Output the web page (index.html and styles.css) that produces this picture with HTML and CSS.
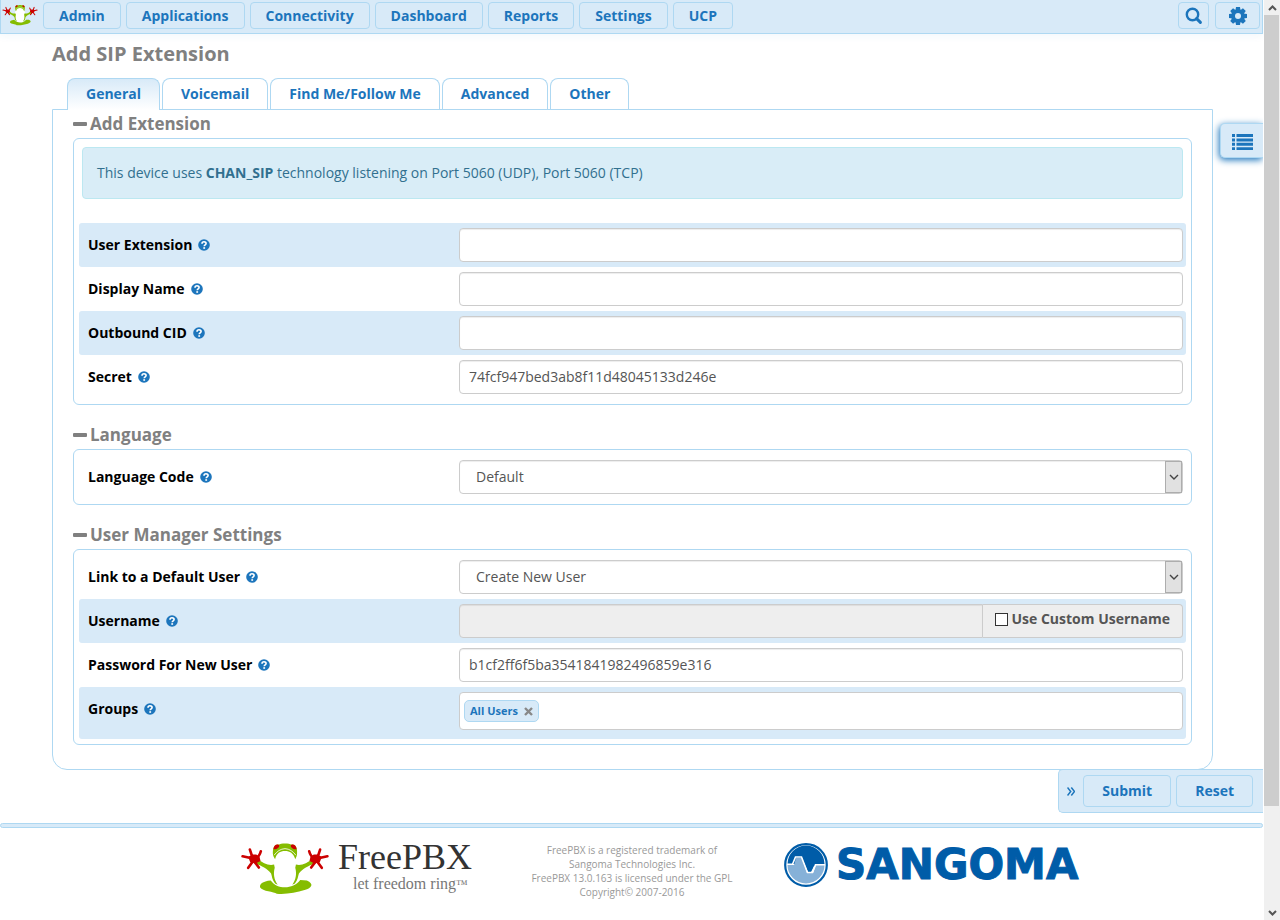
FILE: index.html
```html
<!DOCTYPE html>
<html lang="en">
<head>
<meta charset="utf-8">
<title>Add SIP Extension</title>
<link rel="stylesheet" href="styles.css">
</head>
<body>
<svg class="defs" aria-hidden="true">
  <symbol id="frog" viewBox="30 80 270 160">
    <path fill="#fff" d="M132 124C138 104 150 98 165 98C181 98 192 104 198 124C204 150 212 180 194 206C182 222 150 222 137 206C120 180 126 150 132 124Z"/>
    <g fill="#85bd00">
      <path d="M82 130C98 145 116 152 132 148L134 158C129 176 132 194 143 209L135 205C126 194 126 184 123 175C112 162 94 151 76 146Z"/>
      <path d="M248 130C232 145 214 152 198 148L196 158C201 176 198 194 187 209L195 205C204 194 204 184 207 175C218 162 236 151 254 146Z"/>
      <path d="M129 121C126 97 134 86 146 88C151 83 179 83 184 88C197 86 204 97 201 121L196 132C190 113 180 107 165 107C150 107 140 113 135 132Z"/>
      <path d="M90 217C87 208 97 198 122 196C141 224 189 224 211 195L231 196C254 207 246 218 224 225C199 232 168 239 140 236C132 229 97 229 90 217Z"/>
    </g>
    <path fill="none" stroke="#fff" stroke-width="2.500" d="M132 120C141 108 151 101 165 100C179 101 189 108 198 120"/>
    <g fill="#c00">
      <path d="M130 102C131 90 139 85 147 89C150 95 141 103 130 102Z"/>
      <path d="M200 102C199 90 191 85 183 89C180 95 189 103 200 102Z"/>
      <path d="M54 125L66 118H78L88 124L91 137L76 145L60 141Z"/>
      <path d="M276 125L264 118H252L242 124L239 137L254 145L270 141Z"/>
    </g>
    <g fill="none" stroke="#c00" stroke-width="8" stroke-linecap="round" stroke-linejoin="round">
      <path d="M37 123L68 130L59 103M76 130Q88 124 92 108M54 158L70 136L86 157"/>
      <path d="M293 123L262 130L271 103M254 130Q242 124 238 108M276 158L260 136L244 157"/>
    </g>
  </symbol>
  <symbol id="help" viewBox="0 0 12 12">
    <circle cx="6" cy="6" r="5.8" fill="#1c75bc"/>
    <path d="M4 4.7C4 2.2 8.1 2.2 8.1 4.6C8.1 5.9 6.2 5.9 6.2 7.3" fill="none" stroke="#fff" stroke-width="1.6"/>
    <path d="M5.3 8.2h1.8v1.6H5.3z" fill="#fff"/>
  </symbol>
  <symbol id="chevron" viewBox="0 0 10 10">
    <path d="M1 3l4 4 4-4" fill="none" stroke="#444" stroke-width="1.4"/>
  </symbol>
</svg>
<div class="screen">
  <div class="app">
    <header class="topbar">
      <a class="brand" href="#" aria-label="FreePBX"><svg width="36" height="22"><use href="#frog"/></svg></a>
      <nav class="menu">
        <button class="btn">Admin</button>
        <button class="btn">Applications</button>
        <button class="btn">Connectivity</button>
        <button class="btn">Dashboard</button>
        <button class="btn">Reports</button>
        <button class="btn">Settings</button>
        <button class="btn">UCP</button>
      </nav>
      <div class="tools">
        <button class="btn btn-search" aria-label="Search">
          <svg width="18" height="18" viewBox="0 0 18 18" fill="none" stroke="#1c75bc"><circle cx="7.5" cy="7.5" r="5.7" stroke-width="2.4"/><path d="M11.6 11.6L15.4 15.4" stroke-width="3" stroke-linecap="round"/></svg>
        </button>
        <button class="btn btn-gear" aria-label="Settings menu">
          <svg width="18" height="18" viewBox="-9 -9 18 18"><g fill="#1c75bc"><circle r="6.8"/><g id="teeth"><path d="M-2-9h4l.6 4h-5.2zM-2 9h4l.6-4h-5.2z"/><path d="M-9-2v4l4 .6v-5.2zM9-2v4l-4 .6v-5.2z"/></g><use href="#teeth" transform="rotate(45)"/></g><circle r="3" fill="#d8eaf8"/></svg>
        </button>
      </div>
    </header>

    <main class="content">
      <h1>Add SIP Extension</h1>
      <div class="tabs" role="tablist">
        <button class="tab active" role="tab" aria-selected="true">General</button>
        <button class="tab" role="tab">Voicemail</button>
        <button class="tab" role="tab">Find Me/Follow Me</button>
        <button class="tab" role="tab">Advanced</button>
        <button class="tab" role="tab">Other</button>
      </div>
      <form class="panel" id="extension">
        <section>
          <h2><span class="minus"></span>Add Extension</h2>
          <div class="box">
            <div class="alert">This device uses <strong>CHAN_SIP</strong> technology listening on Port 5060 (UDP), Port 5060 (TCP)</div>
            <div class="row shaded">
              <label for="ext">User Extension <svg class="help"><use href="#help"/></svg></label>
              <input class="field" id="ext" type="text">
            </div>
            <div class="row">
              <label for="name">Display Name <svg class="help"><use href="#help"/></svg></label>
              <input class="field" id="name" type="text">
            </div>
            <div class="row shaded">
              <label for="cid">Outbound CID <svg class="help"><use href="#help"/></svg></label>
              <input class="field" id="cid" type="text">
            </div>
            <div class="row">
              <label for="secret">Secret <svg class="help"><use href="#help"/></svg></label>
              <input class="field" id="secret" type="text" value="74fcf947bed3ab8f11d48045133d246e">
            </div>
          </div>
        </section>
        <section>
          <h2><span class="minus"></span>Language</h2>
          <div class="box">
            <div class="row">
              <label for="lang">Language Code <svg class="help"><use href="#help"/></svg></label>
              <div class="select"><select class="field" id="lang"><option>Default</option></select><span class="drop"><svg width="10" height="10"><use href="#chevron"/></svg></span></div>
            </div>
          </div>
        </section>
        <section>
          <h2><span class="minus"></span>User Manager Settings</h2>
          <div class="box">
            <div class="row">
              <label for="link">Link to a Default User <svg class="help"><use href="#help"/></svg></label>
              <div class="select"><select class="field" id="link"><option>Create New User</option></select><span class="drop"><svg width="10" height="10"><use href="#chevron"/></svg></span></div>
            </div>
            <div class="row shaded">
              <label for="user">Username <svg class="help"><use href="#help"/></svg></label>
              <div class="group">
                <input class="field" id="user" type="text" disabled>
                <div class="addon"><input type="checkbox" id="custom"><label for="custom">Use Custom Username</label></div>
              </div>
            </div>
            <div class="row">
              <label for="pass">Password For New User <svg class="help"><use href="#help"/></svg></label>
              <input class="field" id="pass" type="text" value="b1cf2ff6f5ba3541841982496859e316">
            </div>
            <div class="row shaded row-tags">
              <label for="groups">Groups <svg class="help"><use href="#help"/></svg></label>
              <div class="tagbox">
                <span class="tag">All Users<button type="button" aria-label="Remove All Users"><svg width="9" height="9" viewBox="0 0 9 9"><path d="M1 1l7 7M8 1L1 8" stroke="#888" stroke-width="2.4"/></svg></button></span>
                <input id="groups" type="text">
              </div>
            </div>
          </div>
        </section>
      </form>
    </main>

    <div class="actions">
      <button class="collapse" aria-label="Collapse"><svg width="8" height="9" viewBox="0 0 8 9" fill="none" stroke="#1c75bc" stroke-width="1.5"><path d="M.5.5l3.2 4-3.2 4M4.3.5l3.2 4-3.2 4"/></svg></button>
      <button class="btn" type="submit" form="extension">Submit</button>
      <button class="btn" type="reset" form="extension">Reset</button>
    </div>
    <div class="rule"></div>
    <footer class="footer">
      <svg class="logo-freepbx" width="240" height="66" viewBox="0 -10 240 66" role="img" aria-label="FreePBX let freedom ring">
        <use href="#frog" x="0" y="0" width="90" height="53"/>
        <text class="word" x="98" y="27">FreePBX</text>
        <text class="motto" x="113" y="47">let freedom ring<tspan class="tm" dy="-1">™</tspan></text>
      </svg>
      <p>FreePBX is a registered trademark of<br>Sangoma Technologies Inc.<br>FreePBX 13.0.163 is licensed under the GPL<br>Copyright© 2007-2016</p>
      <svg class="logo-sangoma" width="304" height="66" viewBox="0 -10 304 66" role="img" aria-label="Sangoma">
        <circle cx="22" cy="23" r="20.8" fill="#fff" stroke="#005ca8" stroke-width="2.2"/>
        <path fill="#005ca8" d="M3.500 22A18.500 18.500 0 0 1 40.500 22L32 24H30L27 30H24L18 16H14L11 22Z"/>
        <path fill="#86b1d8" d="M3.500 23A18.500 18.500 0 0 0 40.500 23H32L29 31H23L18 16H12L10 23Z"/>
        <path fill="none" stroke="#fff" stroke-width="1.600" d="M3 22.300H8.500L11.500 15H17.500L23.500 30.500H28.500L31.500 22.800H41"/>
        <text class="sangoma" x="52" y="37">SANGOMA</text>
      </svg>
    </footer>
    <button class="sidetab" aria-label="Extension list">
      <svg width="21" height="16" viewBox="0 0 21 16" fill="#1c75bc"><path d="M0 0h3v3H0zM0 4.400h3v3H0zM0 8.800h3v3H0zM0 13.200h3v3H0zM4.500 0H21v3H4.500zM4.500 4.400H21v3H4.500zM4.500 8.800H21v3H4.500zM4.500 13.200H21v3H4.500z"/></svg>
    </button>
  </div>
  <div class="scrollbar" aria-hidden="true">
    <span class="arrow"><svg width="9" height="8" viewBox="0 0 9 8"><path d="M1 6l3.500-3.500L8 6" fill="none" stroke="#555" stroke-width="2"/></svg></span>
    <span class="thumb"></span>
    <span class="track"></span>
    <span class="arrow"><svg width="9" height="8" viewBox="0 0 9 8"><path d="M1 2l3.500 3.500L8 2" fill="none" stroke="#555" stroke-width="2"/></svg></span>
  </div>
</div>
</body>
</html>
```

FILE: styles.css
```css
* { box-sizing: border-box; }
body {
  margin: 0;
  background: #fff;
  color: #555;
  font: 14px/20px "Open Sans", "Noto Sans", sans-serif;
}
button, input, select { font: inherit; margin: 0; }
svg { display: block; }
.defs { position: absolute; width: 0; height: 0; }

.screen { display: flex; min-height: 100vh; }
.app {
  position: relative;
  flex: 1;
  min-width: 0;
  display: flex;
  flex-direction: column;
}

.topbar {
  display: flex;
  align-items: flex-start;
  height: 34px;
  padding: 1px 2px 0 1px;
  margin-right: 1px;
  background: #d8eaf8;
  border: solid #aed8f2;
  border-width: 0 1px 1px;
  box-shadow: 0 2px 8px rgba(28, 117, 188, .06);
}
.brand { width: 41px; padding-top: 3px; }
.menu, .tools { display: flex; gap: 5px; padding-top: 1px; }
.tools { margin-left: auto; gap: 6px; }
.btn {
  display: flex;
  align-items: center;
  justify-content: center;
  height: 27px;
  padding: 0 15px;
  background: #d8eaf8;
  border: 1px solid #aed8f2;
  border-radius: 4px;
  color: #1c75bc;
  font-weight: 700;
}
.btn-search { width: 31px; padding: 0; }
.btn-gear { width: 45px; padding: 0; }

.content { padding: 9px 51px 0 52px; }
h1 { margin: 0 0 13px; font-size: 20px; line-height: 22px; color: #808080; }
.tabs { display: flex; gap: 2px; padding-left: 15px; }
.tab {
  height: 31px;
  padding: 0 18px;
  background: #fff;
  border: 1px solid #aed8f2;
  border-bottom: 0;
  border-radius: 8px 8px 0 0;
  color: #1c75bc;
  font-weight: 700;
}
.tab.active {
  height: 32px;
  margin-bottom: -1px;
  padding-bottom: 1px;
  background: linear-gradient(#d8eaf8, #fff);
  z-index: 1;
}
.panel {
  display: flex;
  flex-direction: column;
  gap: 16px;
  padding: 0 20px 24px;
  border: 1px solid #aed8f2;
  border-radius: 0 0 15px 15px;
}
h2 {
  display: flex;
  align-items: center;
  gap: 3px;
  margin: 0;
  font-size: 17px;
  line-height: 28px;
  color: #808080;
}
.minus { width: 14px; height: 4px; border-radius: 1px; background: #808080; }
.box { padding: 5px; border: 1px solid #aed8f2; border-radius: 6px; }
.alert {
  margin: 3px 3px 24px;
  padding: 15px 14px;
  background: #d9edf7;
  border: 1px solid #bce8f1;
  border-radius: 4px;
  color: #31708f;
}
.row {
  display: grid;
  grid-template-columns: 1fr 2fr;
  column-gap: 9px;
  padding: 5px 3px 5px 9px;
  border-radius: 3px;
}
.shaded { background: #d8eaf8; }
.row > label {
  display: flex;
  align-items: center;
  gap: 6px;
  height: 34px;
  color: #000;
  font-weight: 700;
}
.help { width: 12px; height: 12px; }
.field {
  width: 100%;
  height: 34px;
  padding: 5px 9px 7px;
  background: #fff;
  border: 1px solid #ccc;
  border-radius: 4px;
  box-shadow: inset 0 1px 1px rgba(0, 0, 0, .075);
  color: #555;
}
.select { position: relative; }
select.field { appearance: none; padding: 6px 16px; }
.drop {
  position: absolute;
  inset: 1px 1px 1px auto;
  width: 17px;
  display: grid;
  place-items: center;
  background: #e1e1e1;
  border: 1px solid #adadad;
  pointer-events: none;
}
.group { display: flex; }
.group .field { flex: 1; min-width: 0; background: #eee; border-radius: 4px 0 0 4px; }
.addon {
  display: flex;
  align-items: center;
  gap: 3px;
  padding: 0 12px 4px;
  background: #eee;
  border: 1px solid #ccc;
  border-left: 0;
  border-radius: 0 4px 4px 0;
  font-weight: 700;
}
.addon input {
  appearance: none;
  width: 13px;
  height: 13px;
  background: #fff;
  border: 1px solid #333;
}
.row-tags { padding-bottom: 9px; }
.tagbox {
  display: flex;
  align-items: center;
  gap: 4px;
  height: 38px;
  padding: 0 4px;
  background: #fff;
  border: 1px solid #ccc;
  border-radius: 4px;
}
.tagbox input { flex: 1; min-width: 0; border: 0; outline: 0; background: none; }
.tag {
  display: flex;
  align-items: center;
  gap: 6px;
  height: 22px;
  padding: 0 5px;
  background: #d8eaf8;
  border: 1px solid #aed8f2;
  border-radius: 5px;
  color: #1c75bc;
  font-size: 11px;
  font-weight: 700;
}
.tag button { padding: 0; border: 0; background: none; }

.actions {
  align-self: flex-end;
  display: flex;
  align-items: center;
  gap: 5px;
  height: 44px;
  margin: -1px 1px 0 0;
  padding: 0 10px 0 8px;
  background: #d8eaf8;
  border: 1px solid #aed8f2;
  border-right: 0;
  border-radius: 5px 0 0 5px;
}
.actions .btn { height: 32px; padding: 0 18px; }
.collapse { padding: 0; margin-right: 3px; border: 0; background: none; }
.rule {
  height: 5px;
  margin: 10px 1px 0 0;
  background: #d8eaf8;
  border: 1px solid #aed8f2;
  border-radius: 3px;
}
.footer {
  display: grid;
  grid-template-columns: 1fr auto 1fr;
  align-items: start;
  gap: 51px;
  padding-top: 4px;
}
.footer p {
  margin: 11px 0 0;
  color: #999;
  font-size: 10px;
  line-height: 14px;
  text-align: center;
}
.logo-freepbx { justify-self: end; }
.word { font: 36px "Liberation Serif", serif; fill: #333; }
.motto { font: 16px "Liberation Serif", serif; fill: #777; }
.tm { font-size: 12px; }
.sangoma { font: bold 42px "DejaVu Sans", sans-serif; fill: #005ca8; stroke: #005ca8; stroke-width: 1px; }

.sidetab {
  position: absolute;
  top: 123px;
  right: 1px;
  width: 43px;
  height: 35px;
  display: grid;
  place-items: center;
  padding: 3px 0 0;
  background: #d8eaf8;
  border: 1px solid #aed8f2;
  border-right: 0;
  border-radius: 5px 0 0 5px;
  box-shadow: -1px 2px 7px #1c75bc;
  clip-path: inset(-12px 0 -12px -12px);
}

.scrollbar {
  position: sticky;
  top: 0;
  flex: none;
  display: flex;
  flex-direction: column;
  width: 16px;
  height: 100vh;
  background: #f0f0f0;
}
.arrow { display: grid; place-items: center; height: 15px; }
.thumb { flex: 8; margin-right: 1px; background: #cdcdcd; }
.track { flex: 1; }
```
